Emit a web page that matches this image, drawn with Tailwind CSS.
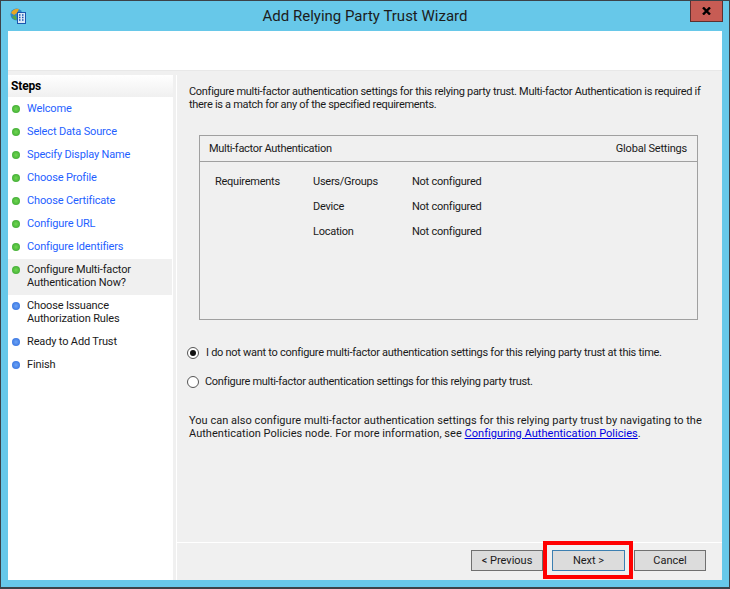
<!DOCTYPE html>
<html lang="en">
<head>
  <meta charset="UTF-8">
  <title>Add Relying Party Trust Wizard</title>
  <script src="https://cdn.jsdelivr.net/npm/@tailwindcss/browser@4"></script>
</head>
<body class="w-[730px] h-[589px] overflow-hidden bg-[#67c8e9] font-['Roboto',sans-serif] text-[11px] tracking-[-0.3px] leading-[13px] text-[#1a1a1a]">
  <div class="flex flex-col w-[730px] h-[589px] border-t border-x border-b-2 border-[#3c4248]">
    <!-- Title bar -->
    <header class="relative flex items-center justify-center h-[30px] shrink-0 text-[15px] tracking-normal text-[#1c1c1c]">
      <svg class="absolute left-[9px] top-[6px]" width="18" height="18" viewBox="0 0 18 18">
        <circle cx="6.5" cy="7.5" r="6" fill="#2f86c9"/>
        <path d="M1 6 Q4 1 9 2 L7 6 L4 8 Z" fill="#e8a623"/>
        <path d="M2 10 L5 8 L7 12 L5 13 Z" fill="#55a845"/>
        <rect x="7.5" y="5.5" width="8" height="11" fill="#dbe9f7" stroke="#1a56b0"/>
        <path d="M9 8h1.5M12 8h1.5M9 10.5h1.5M12 10.5h1.5M9 13h1.5M12 13h1.5" stroke="#1a56b0" stroke-width="1.4"/>
      </svg>
      <span>Add Relying Party Trust Wizard</span>
      <div class="absolute right-[6px] top-0 flex items-center justify-center w-[33px] h-[21px] bg-[#c75c54] border border-t-0 border-[#5c3030]">
        <svg width="9" height="8" viewBox="0 0 9 8"><path d="M1 0.5 L8 7.5 M8 0.5 L1 7.5" stroke="#000" stroke-width="2.4"/></svg>
      </div>
    </header>

    <!-- White banner -->
    <div class="h-[39px] shrink-0 mx-[7px] bg-white"></div>

    <!-- Body -->
    <div class="flex flex-1 min-h-0 mx-[7px] mb-[7px] bg-[#f0f0f0] pt-[4px] border-t border-[#e8e8e8]">
      <!-- Steps -->
      <nav class="flex flex-col w-[165px] shrink-0 bg-white tracking-[-0.15px]">
        <h2 class="flex items-center h-[22px] px-[3px] text-[12px] font-bold text-black bg-gradient-to-b from-white to-[#f0f0f0]">Steps</h2>
        <ul>
          <li class="flex items-center gap-[7px] h-[23px] pl-[4px] text-[#1f5fff]"><span class="w-[8px] h-[8px] rounded-full bg-radial from-[#6fd850] to-[#34a02f] shrink-0"></span>Welcome</li>
          <li class="flex items-center gap-[7px] h-[23px] pl-[4px] text-[#1f5fff]"><span class="w-[8px] h-[8px] rounded-full bg-radial from-[#6fd850] to-[#34a02f] shrink-0"></span>Select Data Source</li>
          <li class="flex items-center gap-[7px] h-[23px] pl-[4px] text-[#1f5fff]"><span class="w-[8px] h-[8px] rounded-full bg-radial from-[#6fd850] to-[#34a02f] shrink-0"></span>Specify Display Name</li>
          <li class="flex items-center gap-[7px] h-[23px] pl-[4px] text-[#1f5fff]"><span class="w-[8px] h-[8px] rounded-full bg-radial from-[#6fd850] to-[#34a02f] shrink-0"></span>Choose Profile</li>
          <li class="flex items-center gap-[7px] h-[23px] pl-[4px] text-[#1f5fff]"><span class="w-[8px] h-[8px] rounded-full bg-radial from-[#6fd850] to-[#34a02f] shrink-0"></span>Choose Certificate</li>
          <li class="flex items-center gap-[7px] h-[23px] pl-[4px] text-[#1f5fff]"><span class="w-[8px] h-[8px] rounded-full bg-radial from-[#6fd850] to-[#34a02f] shrink-0"></span>Configure URL</li>
          <li class="flex items-center gap-[7px] h-[23px] pl-[4px] text-[#1f5fff]"><span class="w-[8px] h-[8px] rounded-full bg-radial from-[#6fd850] to-[#34a02f] shrink-0"></span>Configure Identifiers</li>
          <li class="flex items-start gap-[7px] h-[36px] mt-[1px] pl-[4px] pt-[4px] bg-[#f0f0f0] mr-[1px]"><span class="w-[8px] h-[8px] mt-[3px] rounded-full bg-radial from-[#6fd850] to-[#34a02f] shrink-0"></span><span>Configure Multi-factor<br>Authentication Now?</span></li>
          <li class="flex items-start gap-[7px] h-[35px] pl-[4px] pt-[4px]"><span class="w-[8px] h-[8px] mt-[3px] rounded-full bg-radial from-[#6ea4f5] to-[#2a68dc] shrink-0"></span><span>Choose Issuance<br>Authorization Rules</span></li>
          <li class="flex items-center gap-[7px] h-[23px] pl-[4px]"><span class="w-[8px] h-[8px] rounded-full bg-radial from-[#6ea4f5] to-[#2a68dc] shrink-0"></span>Ready to Add Trust</li>
          <li class="flex items-center gap-[7px] h-[23px] pl-[4px]"><span class="w-[8px] h-[8px] rounded-full bg-radial from-[#6ea4f5] to-[#2a68dc] shrink-0"></span>Finish</li>
        </ul>
      </nav>

      <!-- Main -->
      <main class="flex flex-col flex-1 ml-[3px] border-l border-white">
        <div class="flex-1 pl-[12px] pr-[10px] pt-[10px]">
          <p>Configure multi-factor authentication settings for this relying party trust. Multi-factor Authentication is required if<br>there is a match for any of the specified requirements.</p>
          <section class="mt-[24px] ml-[10px] w-[499px] h-[185px] border border-[#a0a0a0]">
            <div class="flex items-center justify-between h-[26px] pl-[9px] pr-[10px] border-b border-[#a0a0a0]">
              <span>Multi-factor Authentication</span>
              <span class="tracking-[-0.2px]">Global Settings</span>
            </div>
            <div class="grid grid-cols-[98px_99px_1fr] auto-rows-[25px] items-center pl-[15px] pt-[7px] tracking-[-0.25px]">
              <span>Requirements</span><span>Users/Groups</span><span>Not configured</span>
              <span></span><span>Device</span><span>Not configured</span>
              <span></span><span>Location</span><span>Not configured</span>
            </div>
          </section>
          <div class="mt-[20px] -ml-[2px] flex items-center gap-[6px] h-[25px]">
            <span class="flex items-center justify-center w-[12px] h-[12px] rounded-full border border-[#555] bg-white shrink-0"><span class="w-[6px] h-[6px] rounded-full bg-[#111]"></span></span>
            <span class="tracking-[-0.28px] ml-[1px]">I do not want to configure multi-factor authentication settings for this relying party trust at this time.</span>
          </div>
          <div class="mt-[4px] -ml-[2px] flex items-center gap-[6px] h-[25px]">
            <span class="w-[12px] h-[12px] rounded-full border border-[#555] bg-white shrink-0"></span>
            <span>Configure multi-factor authentication settings for this relying party trust.</span>
          </div>
          <p class="mt-[20px] tracking-[0.03px]">You can also configure multi-factor authentication settings for this relying party trust by navigating to the<br>Authentication Policies node. For more information, see <a class="text-[#0000e0] underline">Configuring Authentication Policies</a>.</p>
        </div>
        <!-- Buttons -->
        <footer class="relative flex justify-end items-start gap-[9px] h-[38px] shrink-0 pt-[7px] pr-[16px] border-t border-white tracking-normal">
          <button class="w-[72px] h-[21px] bg-[#dcdcdc] border border-[#707070]">&lt; Previous</button>
          <button class="w-[73px] h-[21px] bg-[#dcdcdc] border border-[#3c7fb1]">Next &gt;</button>
          <button class="w-[72px] h-[21px] bg-[#dcdcdc] border border-[#707070]">Cancel</button>
          <div class="absolute left-[366px] top-[-2px] w-[90px] h-[38px] border-[4px] border-[#ff0000]"></div>
        </footer>
      </main>
    </div>
  </div>
</body>
</html>
